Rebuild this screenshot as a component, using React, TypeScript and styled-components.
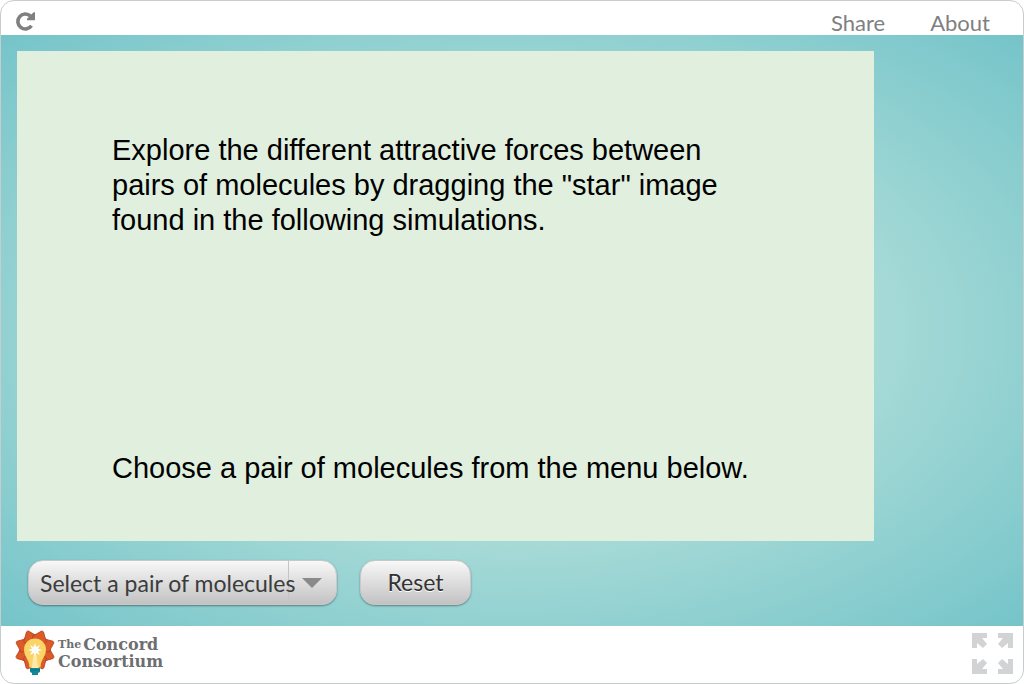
import React, { useState } from "react";
import styled, { createGlobalStyle } from "styled-components";

const GlobalStyle = createGlobalStyle`
  *, *::before, *::after { box-sizing: border-box; }
  body { margin: 0; background: #fff; }
  button, select { font: inherit; margin: 0; cursor: pointer; }
`;

const Frame = styled.div`
  min-height: 100vh;
  display: flex;
  flex-direction: column;
  overflow: hidden;
  border: 1px solid #c8cccc;
  border-radius: 14px;
  background: #fff;
  font-family: Lato, sans-serif;
`;

const TopBar = styled.header`
  height: 34px;
  display: flex;
  align-items: flex-start;
  justify-content: space-between;
  padding: 9px 33px 0 14px;
`;

const IconButton = styled.button`
  display: flex;
  padding: 0;
  border: 0;
  background: none;
`;

const Links = styled.nav`
  display: flex;
  gap: 45px;
`;

const TopLink = styled.a`
  color: #808080;
  font-size: 22px;
  line-height: 26px;
  text-decoration: none;
`;

const Stage = styled.main`
  flex: 1;
  padding: 16px;
  background: radial-gradient(ellipse farthest-corner at 50% 50%, #d8f0e5 0%, #75c4c9 100%);
`;

const Model = styled.section`
  width: 86.6%;
  aspect-ratio: 7 / 4;
  display: flex;
  flex-direction: column;
  justify-content: space-between;
  padding: 82px 95px 55px;
  background: #e0efde;
`;

const Message = styled.p`
  margin: 0;
  max-width: 640px;
  color: #000;
  font-family: "Liberation Sans", Arial, sans-serif;
  font-size: 29px;
  line-height: 35px;
`;

const Controls = styled.div`
  display: flex;
  gap: 23px;
  padding: 19px 11px 0;
`;

const face = "linear-gradient(#f8f8f8, #c2c2c2)";

const MoleculeSelect = styled.select`
  appearance: none;
  width: 309px;
  height: 45px;
  padding: 2px 38px 0 11px;
  border: 1px solid #c8c8c8;
  border-radius: 15px;
  background: linear-gradient(#c4c4c4, #c4c4c4) 259px 0 / 1px 100% no-repeat, ${face};
  box-shadow: 0 1px 2px rgba(0, 0, 0, 0.4);
  color: #3c3c3c;
  font-size: 23px;
  text-overflow: clip;
`;

const SelectWrap = styled.div`
  position: relative;
  display: flex;
`;

const Arrow = styled.svg`
  position: absolute;
  right: 15px;
  top: 18px;
  pointer-events: none;
`;

const ResetButton = styled.button`
  width: 111px;
  height: 45px;
  padding: 0;
  border: 1px solid #c8c8c8;
  border-radius: 15px;
  background: ${face};
  box-shadow: 0 1px 2px rgba(0, 0, 0, 0.4);
  color: #333;
  font-size: 23px;
  text-shadow: 0 1px 0 #fff;
`;

const BottomBar = styled.footer`
  height: 57px;
  display: flex;
  align-items: center;
  justify-content: space-between;
  padding: 0 10px 3px 14px;
`;

const LogoLink = styled.a`
  display: flex;
  align-items: center;
  gap: 2px;
  color: #6d6e70;
  text-decoration: none;
`;

const LogoText = styled.span`
  display: flex;
  flex-direction: column;
  font-family: "DejaVu Serif", serif;
  font-weight: 700;
  font-size: 16px;
  line-height: 17px;
`;

const LogoLine = styled.span`
  display: flex;
  align-items: center;
  gap: 2px;
`;

const Small = styled.span`
  font-size: 11px;
`;

const molecules = [
  "Select a pair of molecules",
  "Two polar molecules",
  "Two nonpolar molecules",
  "Polar and nonpolar molecules",
];

const petals = [-112, 112, -157, 157, -67, 67, -22, 22];

export default function App() {
  const [pair, setPair] = useState(molecules[0]);
  return (
    <>
      <GlobalStyle />
      <Frame>
        <TopBar>
          <IconButton aria-label="Reload">
            <svg width="22" height="22" viewBox="0 0 22 22">
              <path d="M15.500 6A7.500 7.500 0 1 0 16.500 15.800" fill="none" stroke="#808080" strokeWidth="3.6" />
              <path d="M20 2.200v8H12V8.800L18.600 2.200z" fill="#808080" />
            </svg>
          </IconButton>
          <Links>
            <TopLink href="#share">Share</TopLink>
            <TopLink href="#about">About</TopLink>
          </Links>
        </TopBar>
        <Stage>
          <Model>
            <Message>
              Explore the different attractive forces between pairs of molecules by dragging the
              "star" image found in the following simulations.
            </Message>
            <Message>Choose a pair of molecules from the menu below.</Message>
          </Model>
          <Controls>
            <SelectWrap>
              <MoleculeSelect
                aria-label="Pair of molecules"
                value={pair}
                onChange={(e) => setPair(e.target.value)}
              >
                {molecules.map((m) => (
                  <option key={m}>{m}</option>
                ))}
              </MoleculeSelect>
              <Arrow width="20" height="10" viewBox="0 0 20 10">
                <path d="M0 0h20L10 10z" fill="#8a8a8a" />
              </Arrow>
            </SelectWrap>
            <ResetButton onClick={() => setPair(molecules[0])}>Reset</ResetButton>
          </Controls>
        </Stage>
        <BottomBar>
          <LogoLink href="#concord" aria-label="The Concord Consortium">
            <svg width="41" height="46" viewBox="0 0 41 46">
              <circle cx="20" cy="20" r="15" fill="#b8401f" />
              {petals.map((a) => (
                <path
                  key={a}
                  d="M20 20L12.500 8Q16 4 19 0Q20 -0.500 21 0Q24 4 27.500 8z"
                  fill="#dc5a28"
                  stroke="#b8401f"
                  strokeWidth="0.8"
                  transform={`rotate(${a} 20 20)`}
                />
              ))}
              <path d="M20 8.500a11 11 0 0 1 11 11c0 7-5.500 10-5.500 18h-11c0-8-5.500-11-5.500-18a11 11 0 0 1 11-11z" fill="#fbd468" />
              <path d="M18.500 25h3l1.500 12h-6z" fill="#fde9a8" />
              <path
                d="M20 13l1.200 4 3.800-2-2 3.800 4 1.200-4 1.200 2 3.800-3.800-2-1.200 4-1.200-4-3.800 2 2-3.800-4-1.200 4-1.200-2-3.800 3.800 2z"
                fill="#fff"
              />
              <path d="M15 38h10v4l-2 1v2h-6v-2l-2-1z" fill="#128a96" />
              <path d="M15 40h10" stroke="#0b6974" strokeWidth="0.8" />
            </svg>
            <LogoText>
              <LogoLine>
                <Small>The</Small>
                <span>Concord</span>
              </LogoLine>
              <LogoLine>Consortium</LogoLine>
            </LogoText>
          </LogoLink>
          <IconButton aria-label="Fullscreen">
            <svg width="41" height="41" viewBox="0 0 41 41" fill="#d1d3d4">
              <path d="M0 0H15V5H10L15 11L11 15L5 10V15H0z" />
              <path d="M41 0H26V5H31L26 11L30 15L36 10V15H41z" />
              <path d="M0 41H15V36H10L15 30L11 26L5 31V26H0z" />
              <path d="M41 41H26V36H31L26 30L30 26L36 31V26H41z" />
            </svg>
          </IconButton>
        </BottomBar>
      </Frame>
    </>
  );
}
